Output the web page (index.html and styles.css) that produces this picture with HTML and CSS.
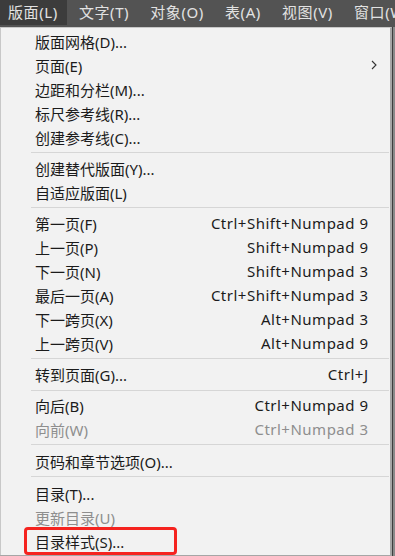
FILE: index.html
```html
<!DOCTYPE html>
<html lang="zh-CN">
<head>
<meta charset="utf-8">
<link rel="stylesheet" href="styles.css">
</head>
<body>
<div class="menubar">
  <span class="top active">版面(L)</span>
  <span class="top">文字(T)</span>
  <span class="top">对象(O)</span>
  <span class="top">表(A)</span>
  <span class="top">视图(V)</span>
  <span class="top">窗口(W)</span>
</div>
<div class="stage">
  <div class="dropdown">
    <div class="item"><span class="label">版面网格(D)...</span></div>
    <div class="item"><span class="label">页面(E)</span><svg class="arrow" width="6" height="10" viewBox="0 0 6 10"><path d="M1 1 L5 5 L1 9" fill="none" stroke="#333" stroke-width="1.1"/></svg></div>
    <div class="item"><span class="label">边距和分栏(M)...</span></div>
    <div class="item"><span class="label">标尺参考线(R)...</span></div>
    <div class="item"><span class="label">创建参考线(C)...</span></div>
    <div class="sep"></div>
    <div class="item"><span class="label">创建替代版面(Y)...</span></div>
    <div class="item"><span class="label">自适应版面(L)</span></div>
    <div class="sep"></div>
    <div class="item"><span class="label">第一页(F)</span><span class="key">Ctrl+Shift+Numpad 9</span></div>
    <div class="item"><span class="label">上一页(P)</span><span class="key">Shift+Numpad 9</span></div>
    <div class="item"><span class="label">下一页(N)</span><span class="key">Shift+Numpad 3</span></div>
    <div class="item"><span class="label">最后一页(A)</span><span class="key">Ctrl+Shift+Numpad 3</span></div>
    <div class="item"><span class="label">下一跨页(X)</span><span class="key">Alt+Numpad 3</span></div>
    <div class="item"><span class="label">上一跨页(V)</span><span class="key">Alt+Numpad 9</span></div>
    <div class="sep"></div>
    <div class="item"><span class="label">转到页面(G)...</span><span class="key">Ctrl+J</span></div>
    <div class="sep sep-low"></div>
    <div class="item"><span class="label">向后(B)</span><span class="key">Ctrl+Numpad 9</span></div>
    <div class="item disabled"><span class="label">向前(W)</span><span class="key">Ctrl+Numpad 3</span></div>
    <div class="sep sep-tall"></div>
    <div class="item"><span class="label">页码和章节选项(O)...</span></div>
    <div class="sep sep-tall"></div>
    <div class="item"><span class="label">目录(T)...</span></div>
    <div class="item disabled"><span class="label">更新目录(U)</span></div>
    <div class="item highlighted"><span class="label">目录样式(S)...</span></div>
  </div>
</div>
</body>
</html>
```
FILE: styles.css
```css
html, body {
  margin: 0;
  padding: 0;
}
body {
  width: 395px;
  height: 556px;
  overflow: hidden;
  background: #3e3e3e;
  font-family: "Noto Sans", "Noto Sans CJK SC", sans-serif;
  font-size: 15px;
}
.menubar {
  height: 27px;
  background: #535353;
  display: flex;
  align-items: flex-start;
  gap: 21px;
  white-space: nowrap;
  overflow: hidden;
}
.top {
  color: #e2e2e2;
  height: 25px;
  line-height: 25px;
  letter-spacing: 0.6px;
}
.top.active {
  background: #3c3c3c;
  padding: 0 9px 0 8px;
  margin-right: -9px;
}
.stage {
  display: flex;
  height: 529px;
  background: linear-gradient(to right, #3e3e3e 393px, #8a8a8a 393px);
}
.dropdown {
  width: 392px;
  height: 528px;
  background: #f2f2f2;
  border: 1px solid #c8c8c8;
  border-bottom: none;
  border-right: 2px solid #a6a6a6;
  box-shadow: 0 2px 0 #a6a6a6;
  padding-top: 1px;
  box-sizing: border-box;
}
.item {
  position: relative;
  height: 24px;
  display: flex;
  align-items: center;
  padding-left: 34px;
  padding-right: 22px;
  color: #1b1b1b;
}
.label {
  flex: 1;
  white-space: nowrap;
}
.key {
  white-space: nowrap;
  letter-spacing: 0.5px;
  margin-right: -0.5px;
}
.disabled {
  color: #8e8e8e;
}
.arrow {
  position: absolute;
  right: 13px;
  top: 7px;
}
.sep {
  height: 7px;
  padding: 3px 1px 0 30px;
  box-sizing: border-box;
}
.sep::before {
  content: "";
  display: block;
  height: 1px;
  background: #d6d6d6;
}
.sep-low {
  padding-top: 4px;
}
.sep-tall {
  height: 8px;
}
.highlighted::after {
  content: "";
  position: absolute;
  left: 23px;
  top: -2px;
  width: 147px;
  height: 22px;
  border: 3px solid #f5231f;
  border-radius: 4px;
}
```
